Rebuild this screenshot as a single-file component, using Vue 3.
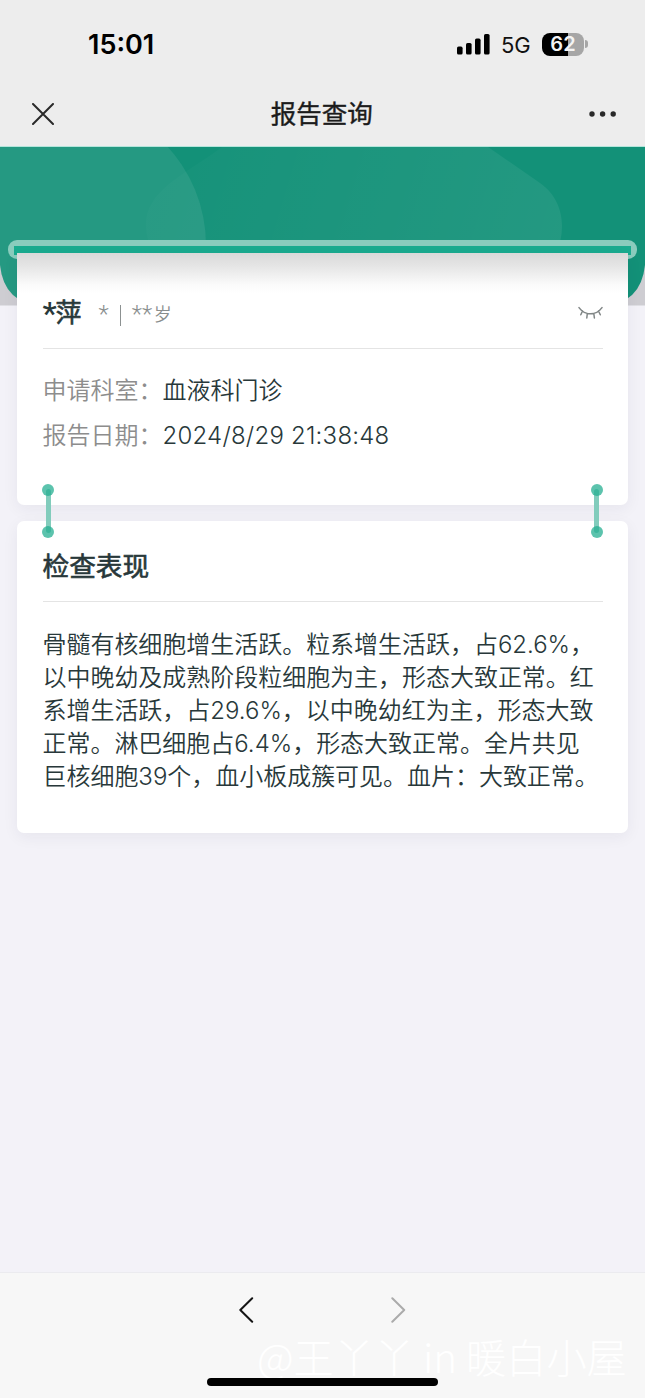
<script setup>
const fields = [
  { label: '申请科室：', value: '血液科门诊' },
  { label: '报告日期：', value: '2024/8/29 21:38:48', latin: true },
]
const findings = [
  '骨髓有核细胞增生活跃。粒系增生活跃，占62.6%，',
  '以中晚幼及成熟阶段粒细胞为主，形态大致正常。红',
  '系增生活跃，占29.6%，以中晚幼红为主，形态大致',
  '正常。淋巴细胞占6.4%，形态大致正常。全片共见',
  '巨核细胞39个，血小板成簇可见。血片：大致正常。',
]
</script>

<template>
  <div class="screen">
    <header class="top">
      <div class="status">
        <span class="time">15:01</span>
        <div class="indicators">
          <svg class="signal" width="33" height="21" viewBox="0 0 33 21">
            <rect x="0" y="12.6" width="5.6" height="8" rx="1.6" />
            <rect x="9" y="9" width="5.6" height="11.6" rx="1.6" />
            <rect x="18" y="4.6" width="5.6" height="16" rx="1.6" />
            <rect x="27" y="0" width="5.6" height="20.6" rx="1.6" />
          </svg>
          <span class="network">5G</span>
          <div class="battery"><span>62</span></div>
          <i class="battery-cap"></i>
        </div>
      </div>
      <nav class="nav">
        <svg width="22" height="22" viewBox="0 0 22 22"><path d="M1 1L21 21M21 1L1 21" fill="none" stroke="#292929" stroke-width="2" stroke-linecap="round" /></svg>
        <h1>报告查询</h1>
        <svg width="28" height="6" viewBox="0 0 28 6" fill="#292929"><circle cx="3" cy="3" r="2.7" /><circle cx="13.6" cy="3" r="2.7" /><circle cx="24.2" cy="3" r="2.7" /></svg>
      </nav>
    </header>

    <main class="content">
      <svg class="hero" width="645" height="159" viewBox="0 0 645 159">
        <defs>
          <linearGradient id="sweep" gradientUnits="userSpaceOnUse" x1="170" y1="20" x2="540" y2="130">
            <stop offset="0" stop-color="#fff" stop-opacity="0.015" />
            <stop offset="1" stop-color="#fff" stop-opacity="0.07" />
          </linearGradient>
          <clipPath id="panel"><path d="M0 0H645V118Q641 157 602 159H43Q4 157 0 118Z" /></clipPath>
        </defs>
        <rect width="645" height="158.5" fill="#cecdd2" />
        <g clip-path="url(#panel)">
          <rect width="645" height="159" fill="#139178" />
          <path d="M222 0H488L540 36C556 47 562 64 562 79Q562 102 547 120L500 159H190C155 120 135 82 152 56C164 35 197 19 222 0Z" fill="url(#sweep)" />
          <circle cx="61" cy="98" r="145" fill="#fff" fill-opacity="0.08" />
        </g>
        <rect width="645" height="1" y="-1" fill="#b4e5db" />
      </svg>
      <div class="slot"><i></i></div>

      <section class="card patient">
        <div class="card-head identity">
          <div class="name"><span class="star">*</span><strong>萍</strong></div>
          <div class="meta"><span class="star">*</span><i class="bar"></i><span class="star pair">**</span><span class="age">岁</span></div>
          <svg class="eye" width="26" height="14" viewBox="0 0 26 14" fill="none" stroke="#808686" stroke-width="1.5" stroke-linecap="round"><path d="M1 1.6Q5.5 7.8 12.5 7.8T24 1.6M4.5 5L2.8 8.8M9.3 7.5L8.8 12M15.8 7.5L16.4 12M20.5 5L22.3 8.8" /></svg>
        </div>
        <dl class="fields">
          <div v-for="field in fields" :key="field.label">
            <dt>{{ field.label }}</dt>
            <dd :class="{ latin: field.latin }">{{ field.value }}</dd>
          </div>
        </dl>
        <i class="link left"></i>
        <i class="link right"></i>
      </section>

      <section class="card report">
        <div class="card-head"><h2>检查表现</h2></div>
        <div class="findings">
          <p v-for="line in findings" :key="line">{{ line }}</p>
        </div>
      </section>
    </main>

    <footer class="toolbar">
      <svg width="15" height="26" viewBox="0 0 15 26"><path d="M13.2 1.2L1.3 13L13.2 24.8" fill="none" stroke="#151515" stroke-width="2" stroke-linecap="round" stroke-linejoin="round" /></svg>
      <svg width="15" height="26" viewBox="0 0 15 26"><path d="M1.3 1.2L13.2 13L1.3 24.8" fill="none" stroke="#ababab" stroke-width="2" stroke-linecap="round" stroke-linejoin="round" /></svg>
      <span class="signature">@王丫丫 in 暖白小屋</span>
      <i class="home"></i>
    </footer>
  </div>
</template>

<style>
body {
  background: #f3f2f8;
}
</style>

<style scoped>
* {
  box-sizing: border-box;
}
.screen {
  width: 645px;
  height: 1398px;
  display: flex;
  flex-direction: column;
  overflow: hidden;
  background: #f3f2f8;
  color: #28383a;
  font-family: Inter, "Noto Sans CJK SC", sans-serif;
}
svg {
  display: block;
  flex: none;
}
h1, h2, p, dl, dd {
  margin: 0;
}
.top {
  height: 147px;
  flex: none;
  background: #ededed;
}
.status {
  height: 88px;
  display: flex;
  align-items: center;
  justify-content: space-between;
  padding: 0 57px 0 88px;
}
.time {
  color: #000;
  font-size: 27px;
  font-weight: 600;
  line-height: 32px;
  padding-top: 2px;
}
.indicators {
  display: flex;
  align-items: center;
}
.network {
  margin-left: 11px;
  width: 30px;
  color: #111;
  font-size: 22px;
  line-height: 26px;
  padding-top: 1px;
}
.battery {
  width: 42px;
  height: 23px;
  margin-left: 11px;
  border-radius: 8px;
  background: linear-gradient(90deg, #000 62%, #a6a6a6 62%);
  color: #f4f4f4;
  font-size: 20px;
  font-weight: 600;
  line-height: 23px;
  text-align: center;
}
.battery span {
  display: block;
}
.battery-cap {
  width: 3px;
  height: 8px;
  margin-left: 1px;
  border-radius: 0 3px 3px 0;
  background: #a6a6a6;
}
.nav {
  height: 52px;
  display: grid;
  grid-template-columns: 60px 1fr 60px;
  align-items: center;
  padding: 0 28px 0 31.5px;
}
.nav svg:last-child {
  justify-self: end;
}
h1 {
  color: #1b1b1b;
  font-size: 25.5px;
  font-weight: 400;
  line-height: 36px;
  text-align: center;
  -webkit-text-stroke: 0.4px #1b1b1b;
  padding-right: 5px;
}
.content {
  position: relative;
  flex: 1;
  padding: 106px 17px 0;
}
.hero {
  position: absolute;
  top: 0;
  left: 0;
  overflow: visible;
}
.slot {
  position: absolute;
  top: 93px;
  left: 8px;
  width: 629px;
  height: 19px;
  padding: 6px 6px 0;
  border-radius: 9px;
  background: #8accbd;
}
.slot i {
  display: block;
  height: 9px;
  background: #1aab8f;
}
.card {
  position: relative;
  padding: 0 25.5px;
  background: #fff;
  box-shadow: 0 4px 16px rgba(40, 40, 60, 0.06);
}
.patient {
  height: 252px;
  border-radius: 0 0 7px 7px;
  background: linear-gradient(#d9d9d9, #e5e5e5 13px, #fbfbfb 32px, #fff 40px) top / 100% 40px no-repeat, #fff;
  z-index: 1;
}
.report {
  height: 312px;
  margin-top: 16px;
  border-radius: 7px;
}
.card-head {
  border-bottom: 1px solid #e4e4e4;
}
.identity {
  height: 96px;
  display: flex;
  align-items: center;
  padding-top: 25px;
}
.name, .meta {
  display: flex;
  align-items: center;
}
.name {
  width: 56px;
  font-size: 26px;
  line-height: 36px;
}
.name strong {
  font-weight: 400;
  -webkit-text-stroke: 0.6px #28383a;
}
.name .star {
  width: 13px;
  height: 36px;
  font-family: Roboto, sans-serif;
  font-size: 32px;
  font-weight: 500;
}
.meta {
  color: #898e8e;
  font-size: 18px;
  line-height: 28px;
}
.meta .star {
  width: 20px;
  height: 28px;
  font-family: Roboto, sans-serif;
  font-size: 24px;
  font-weight: 300;
  line-height: 30px;
}
.meta .bar {
  width: 1.6px;
  height: 21px;
  margin: 4px 10.5px 0 1.2px;
  background: #8c9191;
}
.meta .pair {
  width: 22px;
}
.age {
  padding-top: 4px;
  font-weight: 350;
}
.eye {
  margin: -1px -1px 0 auto;
}
.fields {
  padding-top: 19px;
}
.fields div {
  display: flex;
  height: 45px;
  align-items: center;
  font-size: 24px;
  line-height: 34px;
}
dt {
  width: 120px;
  color: #8d8d8d;
  font-weight: 350;
  white-space: nowrap;
}
dd {
  font-weight: 350;
}
.latin {
  letter-spacing: 0.22px;
}
.link {
  position: absolute;
  bottom: -28px;
  width: 5px;
  height: 44px;
  border-radius: 3px;
  background: #82ccbc;
}
.link::before, .link::after {
  content: "";
  position: absolute;
  left: -3.5px;
  width: 12px;
  height: 12px;
  border-radius: 50%;
  background: rgba(38, 175, 146, 0.75);
}
.link::before {
  top: -5px;
}
.link::after {
  bottom: -5px;
}
.left {
  left: 28.5px;
}
.right {
  right: 29px;
}
.report .card-head {
  height: 81px;
  display: flex;
  align-items: center;
  padding-top: 10px;
}
h2 {
  font-size: 26.7px;
  line-height: 38px;
  font-weight: 400;
  -webkit-text-stroke: 0.6px #28383a;
}
.findings {
  padding-top: 26px;
  font-size: 23.97px;
  font-weight: 350;
  line-height: 33px;
  white-space: nowrap;
}
.toolbar {
  position: relative;
  height: 125px;
  flex: none;
  display: flex;
  justify-content: center;
  gap: 137px;
  padding-top: 24px;
  background: #f7f7f7;
  box-shadow: 0 -1px #ebebef;
}
.signature {
  position: absolute;
  left: 257px;
  top: 56px;
  color: #fff;
  font-family: "Noto Sans CJK SC", sans-serif;
  font-size: 40.2px;
  font-weight: 300;
  line-height: 54px;
  white-space: nowrap;
}
.home {
  position: absolute;
  left: 207px;
  bottom: 12px;
  width: 231px;
  height: 8px;
  border-radius: 4px;
  background: #000;
}
</style>
